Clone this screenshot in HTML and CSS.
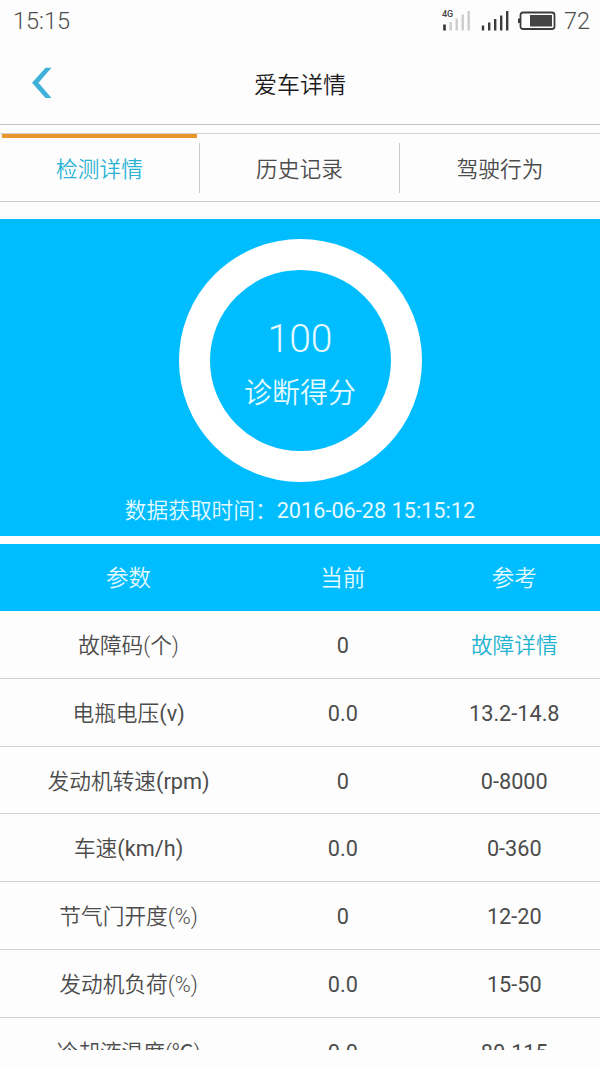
FILE: index.html
```
<!DOCTYPE html>
<html lang="zh-CN">
<head>
    <meta charset="UTF-8">
    <meta name="viewport" content="width=device-width, initial-scale=1.0">
    <title>爱车详情</title>
    <link rel="stylesheet" href="styles.css">
</head>
<body>
    <div class="status-bar">
        <span class="time">15:15</span>
        <div class="status-icons">
            <svg class="signal-4g" width="30" height="24" viewBox="0 0 30 24">
                <text x="0" y="8" class="net-label">4G</text>
                <path d="M2.5 15.500v6" stroke="#333" stroke-width="2.6"/>
                <path d="M8.7 13v8.500M14.700 9.500v12M20.700 5.500v16M26.700 2v19.500" stroke="#ccc" stroke-width="2.400"/>
            </svg>
            <svg class="signal" width="29" height="24" viewBox="0 0 29 24">
                <path d="M2 16.500v5M8.200 13.500v8M14.200 10v11.500M20.200 6.500v15M26.200 2v19.500" stroke="#3c3c3c" stroke-width="2.400"/>
            </svg>
            <svg class="battery" width="38" height="20" viewBox="0 0 38 20">
                <rect x="2.500" y="1.500" width="34" height="16.500" rx="2.500" fill="none" stroke="#3c3c3c" stroke-width="1.800"/>
                <rect x="0" y="7.500" width="2" height="4.500" fill="#3c3c3c"/>
                <rect x="12" y="4" width="22" height="11.500" fill="#444"/>
            </svg>
            <span class="battery-level">72</span>
        </div>
    </div>

    <header class="header">
        <a class="back" href="#">
            <svg width="20" height="32" viewBox="0 0 20 32">
                <path d="M13.500 .8H19.500L6.500 15.800L19.500 31H13.500L0 15.800Z" fill="#3fb0d8"/>
            </svg>
        </a>
        <h1>爱车详情</h1>
    </header>

    <nav class="tabs">
        <a class="tab active" href="#">检测详情</a>
        <a class="tab" href="#">历史记录</a>
        <a class="tab" href="#">驾驶行为</a>
    </nav>

    <section class="score-panel">
        <div class="ring">
            <div class="score">100</div>
            <div class="score-label">诊断得分</div>
        </div>
        <p class="fetch-time">数据获取时间：<span class="num">2016-06-28 15:15:12</span></p>
    </section>

    <div class="params">
        <div class="row head"><span>参数</span><span>当前</span><span>参考</span></div>
        <div class="row"><span>故障码(个)</span><span class="num">0</span><a class="link" href="#">故障详情</a></div>
        <div class="row"><span>电瓶电压<span class="num">(v)</span></span><span class="num">0.0</span><span class="num">13.2-14.8</span></div>
        <div class="row"><span>发动机转速<span class="num">(rpm)</span></span><span class="num">0</span><span class="num">0-8000</span></div>
        <div class="row"><span>车速<span class="num">(km/h)</span></span><span class="num">0.0</span><span class="num">0-360</span></div>
        <div class="row"><span>节气门开度(%)</span><span class="num">0</span><span class="num">12-20</span></div>
        <div class="row"><span>发动机负荷(%)</span><span class="num">0.0</span><span class="num">15-50</span></div>
        <div class="row"><span>冷却液温度(℃)</span><span class="num">0.0</span><span class="num">80-115</span></div>
    </div>
</body>
</html>
```
FILE: styles.css
```
* {
    box-sizing: border-box;
}

body {
    margin: 0;
    height: 1067px;
    overflow: hidden;
    background: #fdfdfd;
    color: #4c4c4c;
    font-family: Roboto, "Noto Sans CJK SC", sans-serif;
    font-size: 21.7px;
    font-weight: 350;
}

a {
    color: inherit;
    text-decoration: none;
}

.num {
    font-weight: 400;
}

.status-bar {
    display: flex;
    justify-content: space-between;
    height: 42px;
    padding: 0 10px 0 13px;
    line-height: 42px;
    font-size: 23.5px;
}

.status-icons {
    display: flex;
    align-items: center;
}

.net-label {
    font-size: 9px;
    font-weight: 500;
    fill: #444;
}

.signal {
    margin-left: 9px;
}

.battery {
    margin-left: 8px;
}

.battery-level {
    margin-left: 8px;
}

/* title bar */
.header {
    display: grid;
    grid-template-columns: 100px 1fr 100px;
    align-items: center;
    height: 83px;
    border-bottom: 1px solid #c4c6c9;
}

.back {
    display: flex;
    padding-left: 32px;
}

.header h1 {
    margin: 0;
    padding-bottom: 1px;
    text-align: center;
    font-size: 23px;
    font-weight: 350;
    color: #1c1c1c;
}

/* tabs */
.tabs {
    display: grid;
    grid-template-columns: repeat(3, 1fr);
    height: 69px;
    margin-top: 8px;
    border-top: 1px solid #d4d4d4;
    border-bottom: 1px solid #ccc;
}

.tab {
    display: flex;
    align-items: center;
    justify-content: center;
    height: 50px;
    margin-top: 9px;
    padding-bottom: 1px;
    border-right: 1px solid #ccc;
}

.tab:last-child {
    border-right: none;
}

.tab.active {
    height: 59px;
    margin: 0 3px 0 2px;
    padding: 5px 0 1px;
    color: #2cb3d5;
    border-top: 4px solid #e8962a;
    border-right: none;
}

.tab.active + .tab {
    margin-left: -1px;
    border-left: 1px solid #ccc;
}

/* score */
.score-panel {
    display: flex;
    flex-direction: column;
    align-items: center;
    height: 317px;
    margin-top: 17px;
    padding-top: 20px;
    background: #00bdff;
    color: #e4faff;
}

.ring {
    width: 243px;
    height: 243px;
    padding-top: 46px;
    border: 31px solid #fff;
    border-radius: 50%;
    text-align: center;
    white-space: nowrap;
}

.score {
    line-height: 46px;
    font-size: 39px;
}

.score-label {
    margin-top: 10px;
    line-height: 44px;
    font-size: 28px;
}

.fetch-time {
    margin: 14px 0 0;
    line-height: 30px;
}

/* parameter table, cut off above the bottom edge */
.params {
    height: 506px;
    margin-top: 8px;
    overflow: hidden;
}

.row {
    display: grid;
    grid-template-columns: 3fr 2fr 2fr;
    align-items: baseline;
    height: 67.8px;
    border-bottom: 1px solid #d2d2d2;
    line-height: 69px;
    text-align: center;
}

.row.head {
    height: 67px;
    border-bottom: none;
    background: #00bdff;
    color: #e4faff;
    font-size: 22.5px;
}

.link {
    color: #1fb3cf;
}
```
